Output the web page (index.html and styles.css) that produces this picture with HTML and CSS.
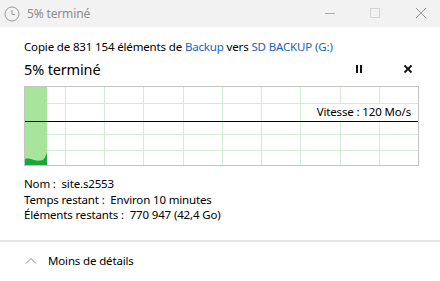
FILE: index.html
```html
<!DOCTYPE html>
<html lang="fr">
<head>
    <meta charset="UTF-8">
    <title>5% terminé</title>
    <link rel="stylesheet" href="styles.css">
</head>
<body>
    <div class="titlebar">
        <svg class="clock" width="16" height="16" viewBox="0 0 16 16">
            <circle cx="8" cy="8" r="7" fill="none" stroke="#9a9a9a" stroke-width="1"/>
            <path d="M8 4 V8.5 H11" fill="none" stroke="#9a9a9a" stroke-width="1"/>
        </svg>
        <span class="title">5% terminé</span>
        <div class="win-buttons">
            <svg width="46" height="27" viewBox="0 0 46 27"><path d="M23 13.5 H33" stroke="#aaa" stroke-width="1"/></svg>
            <svg width="46" height="27" viewBox="0 0 46 27"><rect x="22.5" y="8.5" width="9" height="9" fill="none" stroke="#d4d4d4" stroke-width="1"/></svg>
            <svg width="46" height="27" viewBox="0 0 46 27"><path d="M22 8 L32 18 M32 8 L22 18" stroke="#999" stroke-width="1"/></svg>
        </div>
    </div>

    <div class="content">
        <p class="from">Copie de 831 154 éléments de <span class="link">Backup</span> vers <span class="link">SD BACKUP (G:)</span></p>
        <div class="status">
            <span class="percent">5% terminé</span>
            <div class="controls">
                <svg width="10" height="10" viewBox="0 0 10 10"><rect x="2" y="1" width="2" height="8" fill="#111"/><rect x="6" y="1" width="2" height="8" fill="#111"/></svg>
                <svg width="10" height="10" viewBox="0 0 10 10"><path d="M1.5 1.5 L8.5 8.5 M8.5 1.5 L1.5 8.5" stroke="#111" stroke-width="1.8"/></svg>
            </div>
        </div>
        <div class="graph">
            <svg width="395" height="80" viewBox="0 0 395 80">
                <g stroke="#d5ebd8" stroke-width="1">
                    <path d="M41.5 0 V80 M80.5 0 V80 M119.5 0 V80 M159.5 0 V80 M198.5 0 V80 M237.5 0 V80 M276.5 0 V80 M316.5 0 V80 M355.5 0 V80"/>
                    <path d="M0 17.5 H395 M0 48.5 H395 M0 64.5 H395"/>
                </g>
                <rect x="1" y="1" width="22" height="78" fill="#a8e59c"/>
                <path d="M1 73 C4 72 7 73 10 74 C13 75 16 75 19 74 C21 72 22 69 23 67 V79 H1 Z" fill="#1aa638"/>
                <path d="M1 35.5 H394" stroke="#000" stroke-width="1"/>
                <rect x="0.5" y="0.5" width="394" height="79" fill="none" stroke="#c3c3c3" stroke-width="1"/>
            </svg>
            <span class="speed">Vitesse : 120 Mo/s</span>
        </div>
        <div class="details">
            <p>Nom :&nbsp; site.s2553</p>
            <p>Temps restant :&nbsp; Environ 10 minutes</p>
            <p>Éléments restants :&nbsp; 770 947 (42,4 Go)</p>
        </div>
    </div>

    <div class="footer">
        <svg width="12" height="8" viewBox="0 0 12 8"><path d="M1 6.5 L6 1.5 L11 6.5" fill="none" stroke="#8a8a8a" stroke-width="1"/></svg>
        <span>Moins de détails</span>
    </div>
</body>
</html>
```

FILE: styles.css
```css
* {
    margin: 0;
    padding: 0;
    box-sizing: border-box;
}
body {
    font-family: 'Noto Sans', sans-serif;
    font-size: 11.5px;
    letter-spacing: -0.15px;
    color: #000;
    background: #fff;
    width: 440px;
    height: 281px;
    overflow: hidden;
}
.titlebar {
    height: 27px;
    background-color: #f2f2f2;
    display: flex;
    align-items: center;
}
.clock {
    margin-left: 4px;
}
.title {
    margin-left: 7px;
    color: #8c8c8c;
    font-size: 12px;
}
.win-buttons {
    margin-left: auto;
    display: flex;
}
.content {
    padding: 12px 23px 0 24px;
}
.from {
    line-height: 16px;
}
.link {
    color: #1a64b9;
}
.status {
    display: flex;
    align-items: center;
    justify-content: space-between;
    margin-top: 5px;
    height: 18px;
}
.percent {
    font-size: 14.5px;
}
.controls {
    display: flex;
    gap: 39px;
    padding-right: 4px;
}
.graph {
    position: relative;
    margin-top: 8px;
    height: 80px;
}
.graph svg {
    display: block;
}
.speed {
    position: absolute;
    right: 6px;
    top: 18px;
    line-height: 16px;
    background: #fff;
}
.details {
    margin-top: 10px;
    line-height: 15.5px;
}
.footer {
    margin-top: 17px;
    border-top: 2px solid #e6e6e6;
    height: 40px;
    display: flex;
    align-items: center;
    padding-left: 25px;
    gap: 11px;
}
```
